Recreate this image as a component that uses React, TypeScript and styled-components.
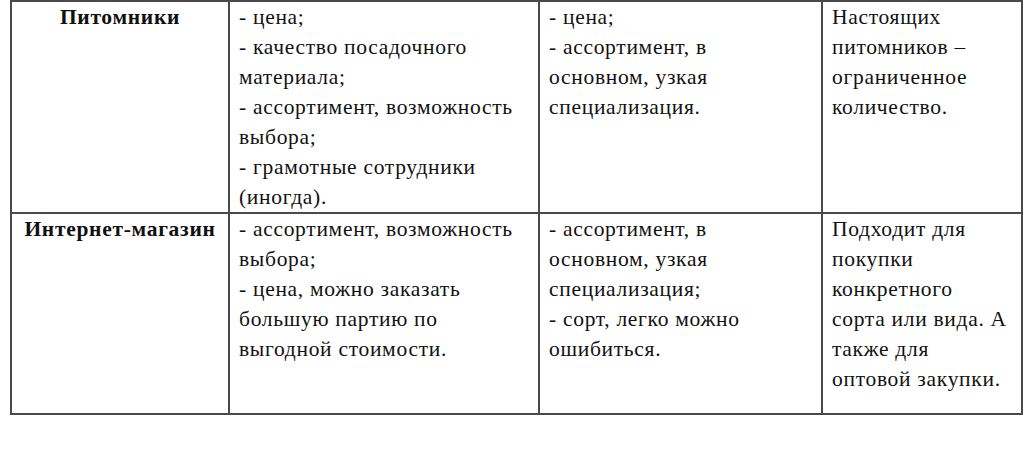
import React from 'react';
import styled, { createGlobalStyle } from 'styled-components';

const GlobalStyle = createGlobalStyle`
  html, body {
    margin: 0;
    padding: 0;
    background: #fff;
  }
`;

interface IRow {
  title: string;
  cells: string[][];
  extra?: number;
}

const rows: IRow[] = [
  {
    title: 'Питомники',
    cells: [
      ['- цена;', '- качество посадочного', 'материала;', '- ассортимент, возможность', 'выбора;', '- грамотные сотрудники', '(иногда).'],
      ['- цена;', '- ассортимент, в', 'основном, узкая', 'специализация.'],
      ['Настоящих', 'питомников –', 'ограниченное', 'количество.'],
    ],
  },
  {
    title: 'Интернет-магазин',
    cells: [
      ['- ассортимент, возможность', 'выбора;', '- цена, можно заказать', 'большую партию по', 'выгодной стоимости.'],
      ['- ассортимент, в', 'основном, узкая', 'специализация;', '- сорт, легко можно', 'ошибиться.'],
      ['Подходит для', 'покупки', 'конкретного', 'сорта или вида. А', 'также для', 'оптовой закупки.'],
    ],
    extra: 19,
  },
];

const widths = [218, 310, 283, 200];

const Page = styled.div`
  padding: 0 3px 0 10px;
`;

const Table = styled.table`
  width: 1011px;
  border-collapse: collapse;
  table-layout: fixed;
  font-family: 'Liberation Serif', 'Times New Roman', serif;
  font-size: 21.5px;
  letter-spacing: 0.7px;
  line-height: 30px;
  color: #111;
`;

const Col = styled.col<{ $width: number }>`
  width: ${({ $width }) => $width}px;
`;

const Cell = styled.td<{ $extra?: number }>`
  box-sizing: border-box;
  border: 2px solid #4a4a4a;
  vertical-align: top;
  padding: 0 4px ${({ $extra }) => $extra ?? 0}px 9px;
  white-space: nowrap;
`;

const TitleCell = styled(Cell)`
  font-weight: bold;
  text-align: center;
  padding-left: 2px;
  padding-right: 2px;
`;

const Line = styled.div``;

export default function App() {
  return (
    <Page>
      <GlobalStyle />
      <Table>
        <colgroup>
          {widths.map((w, i) => (
            <Col key={i} $width={w} />
          ))}
        </colgroup>
        <tbody>
          {rows.map((row) => (
            <tr key={row.title}>
              <TitleCell $extra={row.extra}>{row.title}</TitleCell>
              {row.cells.map((lines, i) => (
                <Cell key={i} $extra={row.extra}>
                  {lines.map((l, j) => (
                    <Line key={j}>{l}</Line>
                  ))}
                </Cell>
              ))}
            </tr>
          ))}
        </tbody>
      </Table>
    </Page>
  );
}
